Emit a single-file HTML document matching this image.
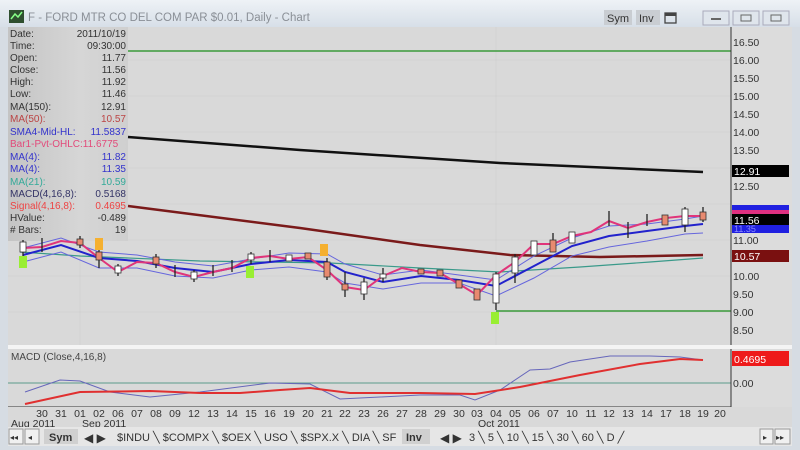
<!DOCTYPE html>
<html><head><meta charset="utf-8"><style>
html,body{margin:0;padding:0;width:800px;height:450px;overflow:hidden;background:#d8dde3;font-family:"Liberation Sans",sans-serif}
</style></head><body>
<svg width="800" height="450" viewBox="0 0 800 450" xmlns="http://www.w3.org/2000/svg" font-family="Liberation Sans, sans-serif">
<defs>
<linearGradient id="tb" x1="0" y1="0" x2="0" y2="1"><stop offset="0" stop-color="#eef2f6"/><stop offset="1" stop-color="#d7dfe8"/></linearGradient>
<linearGradient id="lp" x1="0" y1="0" x2="1" y2="0"><stop offset="0" stop-color="#c4c4c4"/><stop offset="0.6" stop-color="#d6d6d6"/><stop offset="1" stop-color="#cfcfcf"/></linearGradient>
</defs>
<rect x="0" y="0" width="800" height="450" fill="#d6dce3"/>
<rect x="0" y="0" width="800" height="27" fill="url(#tb)"/>
<rect x="9" y="10" width="15" height="13" fill="#2f4f2f"/>
<path d="M11 19 L15 14 L18 17 L22 12" stroke="#8f8" stroke-width="1.5" fill="none"/>
<text x="28" y="21" font-size="11.5" fill="#8a8f96">F - FORD MTR CO DEL COM PAR $0.01, Daily - Chart</text>
<rect x="604" y="10" width="28" height="15" fill="#c9cdd2"/><text x="607" y="22" font-size="11" fill="#333">Sym</text>
<rect x="636" y="10" width="24" height="15" fill="#c9cdd2"/><text x="639" y="22" font-size="11" fill="#333">Inv</text>
<rect x="665" y="13" width="11" height="10" fill="none" stroke="#444" stroke-width="1.3"/><rect x="665" y="13" width="11" height="3" fill="#444"/>
<rect x="703" y="11" width="26" height="14" fill="#dfe5ec" stroke="#aab" /><rect x="733" y="11" width="26" height="14" fill="#dfe5ec" stroke="#aab"/><rect x="763" y="11" width="26" height="14" fill="#dfe5ec" stroke="#aab"/>
<rect x="711" y="18" width="10" height="2" fill="#666"/><rect x="741" y="15" width="10" height="6" fill="none" stroke="#666"/><rect x="771" y="15" width="10" height="6" fill="none" stroke="#666"/>
<!-- chart panel -->
<rect x="8" y="27" width="784" height="320" fill="#dcdcdc"/>
<rect x="8" y="27" width="723" height="320" fill="#d9d9d9"/>
<g stroke="#cfcfcf" stroke-width="0.7">
<line x1="8" y1="60" x2="731" y2="60"/><line x1="8" y1="96" x2="731" y2="96"/><line x1="8" y1="132" x2="731" y2="132"/><line x1="8" y1="168" x2="731" y2="168"/><line x1="8" y1="204" x2="731" y2="204"/><line x1="8" y1="240" x2="731" y2="240"/><line x1="8" y1="276" x2="731" y2="276"/><line x1="8" y1="312" x2="731" y2="312"/>
<line x1="80" y1="27" x2="80" y2="407"/><line x1="496" y1="27" x2="496" y2="407"/>
</g>
<rect x="8" y="27" width="120" height="214" fill="url(#lp)"/>
<g font-size="10" fill="#333">
<text x="10" y="37">Date:</text><text x="126" y="37" text-anchor="end">2011/10/19</text>
<text x="10" y="49">Time:</text><text x="126" y="49" text-anchor="end">09:30:00</text>
<text x="10" y="61">Open:</text><text x="126" y="61" text-anchor="end">11.77</text>
<text x="10" y="73">Close:</text><text x="126" y="73" text-anchor="end">11.56</text>
<text x="10" y="85">High:</text><text x="126" y="85" text-anchor="end">11.92</text>
<text x="10" y="97">Low:</text><text x="126" y="97" text-anchor="end">11.46</text>
<text x="10" y="110">MA(150):</text><text x="126" y="110" text-anchor="end">12.91</text>
<g fill="#b44"><text x="10" y="122">MA(50):</text><text x="126" y="122" text-anchor="end">10.57</text></g>
<g fill="#33c"><text x="10" y="135">SMA4-Mid-HL:</text><text x="126" y="135" text-anchor="end">11.5837</text></g>
<g fill="#e24a7a"><text x="10" y="147">Bar1-Pvt-OHLC:11.6775</text></g>
<g fill="#33c"><text x="10" y="160">MA(4):</text><text x="126" y="160" text-anchor="end">11.82</text>
<text x="10" y="172">MA(4):</text><text x="126" y="172" text-anchor="end">11.35</text></g>
<g fill="#3a9"><text x="10" y="185">MA(21):</text><text x="126" y="185" text-anchor="end">10.59</text></g>
<g fill="#336"><text x="10" y="197">MACD(4,16,8):</text><text x="126" y="197" text-anchor="end">0.5168</text></g>
<g fill="#e44"><text x="10" y="209">Signal(4,16,8):</text><text x="126" y="209" text-anchor="end">0.4695</text></g>
<text x="10" y="221">HValue:</text><text x="126" y="221" text-anchor="end">-0.489</text>
<text x="10" y="233"># Bars:</text><text x="126" y="233" text-anchor="end">19</text>
</g>
<!-- lines -->
<line x1="128" y1="51" x2="731" y2="51" stroke="#3a9a3a" stroke-width="1.5"/>
<line x1="496" y1="311" x2="731" y2="311" stroke="#3a9a3a" stroke-width="1.5"/>
<polyline points="128,137 300,150 500,163 703,172" stroke="#111" stroke-width="2.5" fill="none"/>
<polyline points="128,206 300,228 420,245 510,255 600,257 703,255" stroke="#7a1a1a" stroke-width="2.5" fill="none"/>
<polyline points="20,252 80,256 200,261 330,263 420,268 500,272 580,267 650,262 703,258" stroke="#3a9a8a" stroke-width="1.2" fill="none"/>
<polyline points="23,262 61,252 99,268 137,268 175,276 213,278 251,270 289,267 327,272 345,283 383,289 421,283 459,283 496,296 534,278 572,256 609,247 647,241 685,234 703,233" stroke="#6666dd" stroke-width="1" fill="none"/>
<polyline points="23,248 61,238 99,252 137,255 175,262 213,266 251,259 289,253 327,254 345,264 383,275 421,270 459,275 496,280 534,256 572,238 609,226 647,224 685,219 703,216" stroke="#6666dd" stroke-width="1" fill="none"/>
<polyline points="23,255 61,245 99,258 137,261 175,268 213,272 251,264 289,260 327,262 345,272 383,282 421,276 459,280 496,286 534,266 572,246 609,236 647,231 685,226 703,224" stroke="#2222cc" stroke-width="2" fill="none"/>
<polyline points="23,248 42,247 61,241 80,243 99,258 118,272 137,262 156,263 175,272 194,277 213,272 232,268 251,258 270,256 289,259 308,257 327,270 345,287 364,290 383,276 402,268 421,272 440,273 459,284 477,295 496,275 515,262 534,244 553,244 572,236 591,232 609,221 628,228 647,222 666,218 685,216 703,216" stroke="#e0357a" stroke-width="2" fill="none"/>
<!-- candles -->
<g stroke="#222" stroke-width="1.3">
<line x1="23" y1="240" x2="23" y2="256"/><line x1="42" y1="238" x2="42" y2="252"/><line x1="80" y1="236" x2="80" y2="248"/><line x1="99" y1="248" x2="99" y2="268"/><line x1="118" y1="264" x2="118" y2="276"/><line x1="156" y1="254" x2="156" y2="268"/><line x1="175" y1="265" x2="175" y2="277"/><line x1="194" y1="270" x2="194" y2="282"/><line x1="213" y1="265" x2="213" y2="276"/><line x1="232" y1="260" x2="232" y2="272"/><line x1="251" y1="252" x2="251" y2="264"/><line x1="270" y1="250" x2="270" y2="262"/><line x1="327" y1="258" x2="327" y2="280"/><line x1="345" y1="272" x2="345" y2="297"/><line x1="364" y1="278" x2="364" y2="300"/><line x1="383" y1="268" x2="383" y2="282"/><line x1="496" y1="272" x2="496" y2="310"/><line x1="515" y1="254" x2="515" y2="283"/><line x1="553" y1="233" x2="553" y2="252"/><line x1="609" y1="211" x2="609" y2="226"/><line x1="628" y1="222" x2="628" y2="238"/><line x1="647" y1="214" x2="647" y2="226"/><line x1="685" y1="207" x2="685" y2="232"/><line x1="703" y1="207" x2="703" y2="222"/>
</g>
<g stroke="#333" stroke-width="0.8">
<rect x="20" y="242" width="6" height="10" fill="#fff"/><rect x="77" y="239" width="6" height="6" fill="#e88a70"/><rect x="96" y="252" width="6" height="8" fill="#e88a70"/><rect x="115" y="266" width="6" height="7" fill="#fff"/><rect x="153" y="257" width="6" height="7" fill="#e88a70"/><rect x="191" y="272" width="6" height="7" fill="#fff"/><rect x="248" y="254" width="6" height="6" fill="#fff"/><rect x="286" y="255" width="6" height="6" fill="#fff"/><rect x="305" y="253" width="6" height="6" fill="#e88a70"/><rect x="324" y="262" width="6" height="15" fill="#e88a70"/><rect x="342" y="284" width="6" height="6" fill="#e88a70"/><rect x="361" y="282" width="6" height="12" fill="#fff"/><rect x="380" y="274" width="6" height="4" fill="#fff"/><rect x="418" y="269" width="6" height="5" fill="#e88a70"/><rect x="437" y="270" width="6" height="6" fill="#e88a70"/><rect x="456" y="280" width="6" height="8" fill="#e88a70"/><rect x="474" y="289" width="6" height="11" fill="#e88a70"/><rect x="493" y="274" width="6" height="29" fill="#fff"/><rect x="512" y="257" width="6" height="16" fill="#fff"/><rect x="531" y="241" width="6" height="14" fill="#fff"/><rect x="550" y="240" width="6" height="12" fill="#e88a70"/><rect x="569" y="232" width="6" height="11" fill="#fff"/><rect x="662" y="215" width="6" height="10" fill="#e88a70"/><rect x="682" y="209" width="6" height="16" fill="#fff"/><rect x="700" y="212" width="6" height="8" fill="#e88a70"/>
</g>
<g fill="#9e3" font-size="7"><rect x="19" y="256" width="8" height="12"/><rect x="246" y="266" width="8" height="12"/><rect x="491" y="312" width="8" height="12"/></g>
<g fill="#f5b030"><rect x="95" y="238" width="8" height="12"/><rect x="320" y="244" width="8" height="12"/></g>
<!-- price axis -->
<line x1="731" y1="27" x2="731" y2="345" stroke="#333" stroke-width="1"/>
<g font-size="10.5" fill="#333">
<text x="733" y="46">16.50</text><text x="733" y="64">16.00</text><text x="733" y="82">15.50</text><text x="733" y="100">15.00</text><text x="733" y="118">14.50</text><text x="733" y="136">14.00</text><text x="733" y="154">13.50</text><text x="733" y="190">12.50</text><text x="733" y="244">11.00</text><text x="733" y="280">10.00</text><text x="733" y="298">9.50</text><text x="733" y="316">9.00</text><text x="733" y="334">8.50</text>
</g>
<rect x="732" y="165" width="57" height="12" fill="#000"/><text x="734" y="175" font-size="10.5" fill="#fff">12.91</text>
<rect x="732" y="205" width="57" height="9" fill="#2020e0"/><rect x="732" y="210" width="57" height="4" fill="#e03080"/>
<rect x="732" y="214" width="57" height="11" fill="#000"/><text x="734" y="224" font-size="10.5" fill="#fff">11.56</text>
<rect x="732" y="225" width="57" height="8" fill="#2020e0"/><text x="734" y="232" font-size="9" fill="#88f">11.35</text>
<rect x="732" y="250" width="57" height="12" fill="#7a1010"/><text x="734" y="260" font-size="10.5" fill="#fff">10.57</text>
<!-- separator -->
<rect x="8" y="345" width="784" height="4" fill="#f4f4f4"/>
<!-- MACD -->
<rect x="8" y="349" width="784" height="58" fill="#dcdcdc"/>
<rect x="8" y="349" width="723" height="58" fill="#d9d9d9"/>
<text x="11" y="360" font-size="10" fill="#444">MACD (Close,4,16,8)</text>
<line x1="8" y1="383" x2="731" y2="383" stroke="#5a9a8a" stroke-width="1"/>
<polyline points="25,392 60,380 80,381 110,392 150,397 200,392 270,383 310,384 340,399 380,397 420,395 460,395 475,400 500,390 530,370 550,369 570,362 610,356 650,356 680,357 703,360" stroke="#6666bb" stroke-width="1" fill="none"/>
<polyline points="25,404 80,392 150,391 200,393 240,393 280,390 310,388 350,393 420,393 475,394 520,387 580,375 640,364 680,359 703,360" stroke="#e03030" stroke-width="2" fill="none"/>
<line x1="731" y1="349" x2="731" y2="407" stroke="#333"/>
<line x1="8" y1="407" x2="731" y2="407" stroke="#333"/>
<rect x="732" y="351" width="57" height="15" fill="#ee1a1a"/><text x="734" y="363" font-size="10.5" fill="#fff">0.4695</text>
<text x="733" y="387" font-size="10.5" fill="#333">0.00</text>
<!-- dates -->
<rect x="8" y="407" width="784" height="20" fill="#d9d9d9"/>
<g font-size="10.5" fill="#333" text-anchor="middle">
<text x="42" y="417">30</text><text x="61" y="417">31</text><text x="80" y="417">01</text><text x="99" y="417">02</text><text x="118" y="417">06</text><text x="137" y="417">07</text><text x="156" y="417">08</text><text x="175" y="417">09</text><text x="194" y="417">12</text><text x="213" y="417">13</text><text x="232" y="417">14</text><text x="251" y="417">15</text><text x="270" y="417">16</text><text x="289" y="417">19</text><text x="308" y="417">20</text><text x="327" y="417">21</text><text x="345" y="417">22</text><text x="364" y="417">23</text><text x="383" y="417">26</text><text x="402" y="417">27</text><text x="421" y="417">28</text><text x="440" y="417">29</text><text x="459" y="417">30</text><text x="477" y="417">03</text><text x="496" y="417">04</text><text x="515" y="417">05</text><text x="534" y="417">06</text><text x="553" y="417">07</text><text x="572" y="417">10</text><text x="591" y="417">11</text><text x="609" y="417">12</text><text x="628" y="417">13</text><text x="647" y="417">14</text><text x="666" y="417">17</text><text x="685" y="417">18</text><text x="703" y="417">19</text><text x="720" y="417">20</text>
</g>
<g font-size="10.5" fill="#333"><text x="11" y="427">Aug 2011</text><text x="82" y="427">Sep 2011</text><text x="478" y="427">Oct 2011</text></g>
<!-- tab bar -->
<rect x="8" y="427" width="784" height="19" fill="#e6e6e6"/>
<g font-size="11" fill="#333">
<rect x="9" y="429" width="14" height="15" fill="#f0f0f0" stroke="#999"/><text x="10" y="440" font-size="8">◂◂</text>
<rect x="25" y="429" width="14" height="15" fill="#f0f0f0" stroke="#999"/><text x="28" y="440" font-size="8">◂</text>
<rect x="44" y="429" width="34" height="15" fill="#d0d0d0"/><text x="49" y="441" font-weight="bold">Sym</text>
<text x="84" y="442" font-size="12">◀ ▶</text>
<text x="117" y="441">$INDU ╲ $COMPX ╲ $OEX ╲ USO ╲ $SPX.X ╲ DIA ╲ SF</text>
<rect x="402" y="429" width="28" height="15" fill="#d0d0d0"/><text x="406" y="441" font-weight="bold">Inv</text>
<text x="440" y="442" font-size="12">◀ ▶</text>
<text x="469" y="441">3 ╲ 5 ╲ 10 ╲ 15 ╲ 30 ╲ 60 ╲ D ╱</text>
<rect x="760" y="429" width="13" height="15" fill="#f0f0f0" stroke="#999"/><text x="763" y="440" font-size="8">▸</text>
<rect x="775" y="429" width="15" height="15" fill="#f0f0f0" stroke="#999"/><text x="776" y="440" font-size="8">▸▸</text>
</g>
</svg>
</body></html>
